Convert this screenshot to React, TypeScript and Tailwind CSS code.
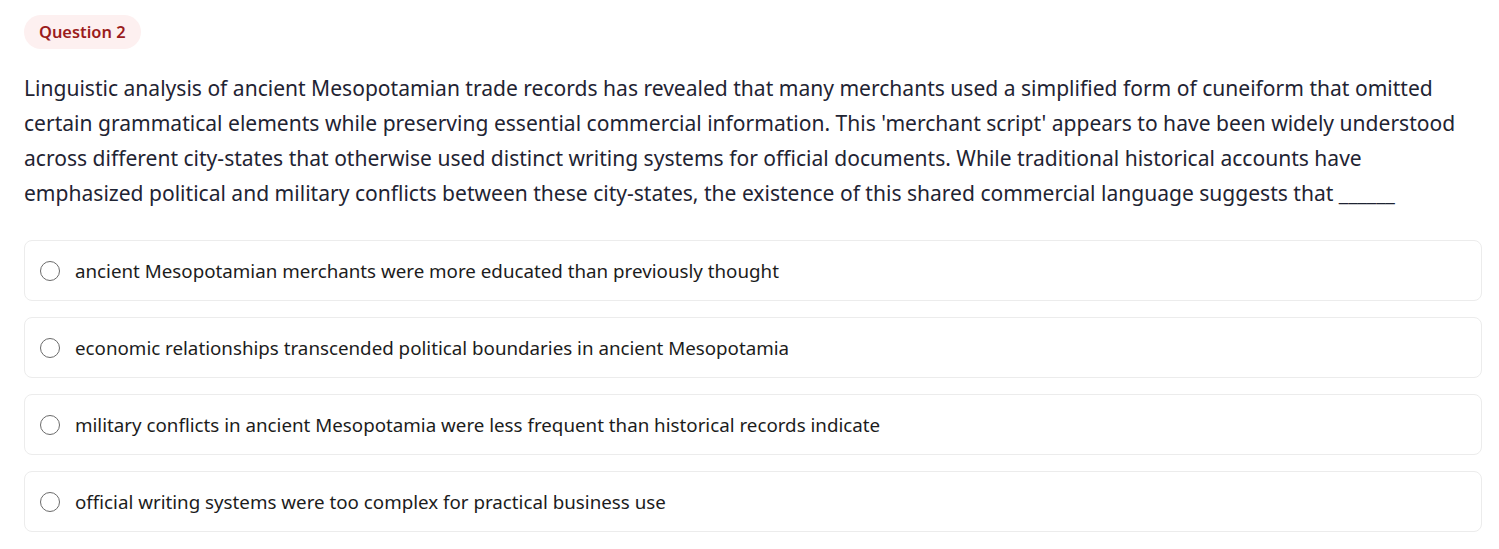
const options = [
  "ancient Mesopotamian merchants were more educated than previously thought",
  "economic relationships transcended political boundaries in ancient Mesopotamia",
  "military conflicts in ancient Mesopotamia were less frequent than historical records indicate",
  "official writing systems were too complex for practical business use",
];

export default function App() {
  return (
    <div className="min-h-screen bg-white pl-6 pr-[17px] pt-[15px] font-['Noto_Sans',sans-serif] text-[#1f2433]">
      <span className="inline-flex h-[34px] items-center rounded-full bg-[#fdf0f0] px-[15px] text-[16.4px] font-semibold text-[#9b1c1c]">
        Question 2
      </span>

      <p className="mt-[21px] text-[21.05px] leading-[35px]">
        Linguistic analysis of ancient Mesopotamian trade records has revealed that many merchants used a simplified
        form of cuneiform that omitted
        <br />
        certain grammatical elements while preserving essential commercial information. This 'merchant script' appears
        to have been widely understood
        <br />
        across different city-states that otherwise used distinct writing systems for official documents. While
        traditional historical accounts have
        <br />
        emphasized political and military conflicts between these city-states, the existence of this shared commercial
        language suggests that ______
      </p>

      <div className="mt-[30px] flex flex-col gap-4">
        {options.map((opt) => (
          <label
            key={opt}
            className="flex h-[61px] cursor-pointer items-center rounded-lg border border-[#ececec] bg-white px-[15px]"
          >
            <span className="h-[20px] w-[20px] shrink-0 rounded-full border-[1.5px] border-[#6b6b6b]" />
            <span className="ml-[15px] pt-[2px] text-[18.75px] text-[#1c1c1c]">{opt}</span>
          </label>
        ))}
      </div>
    </div>
  );
}
